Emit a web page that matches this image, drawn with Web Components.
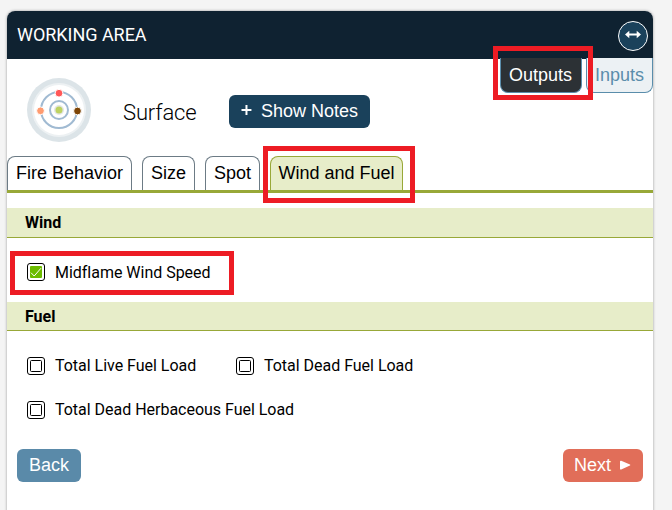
<!DOCTYPE html>
<html lang="en">
<head>
<meta charset="utf-8">
<title>Working Area</title>
<style>
html,body{margin:0;height:100%;overflow:hidden;background:#f4f4f4}
</style>
</head>
<body>
<working-area></working-area>
<script>
function define(name, html) {
  const t = document.createElement('template');
  t.innerHTML = html;
  customElements.define(name, class extends HTMLElement {
    constructor() {
      super();
      this.attachShadow({mode: 'open'}).append(t.content.cloneNode(true));
    }
  });
}

define('icon-expand', `<style>
:host{display:block;box-sizing:border-box;width:30px;height:30px;border:1px solid #fff;border-radius:50%;background:#1a415b}
svg{display:block}
</style><svg width="28" height="28" viewBox="0 0 28 28"><path d="M6 12.5 10.3 8.8V11.4H17.7V8.8L22 12.5 17.7 16.2V13.6H10.3V16.2Z" fill="#fff"/></svg>`);

define('module-icon', `<style>:host{display:block;width:64px;height:64px}svg{display:block}</style>
<svg width="64" height="64" viewBox="0 0 64 64">
<circle cx="32" cy="32" r="32" fill="#dce4e8"/><circle cx="32" cy="32" r="27" fill="#edf1f3"/><circle cx="32" cy="32" r="25" fill="#fff"/>
<g fill="none" stroke="#a0bad2" stroke-width="2"><circle cx="32" cy="32" r="18"/><circle cx="32" cy="32" r="9"/></g>
<g stroke="#fff" stroke-width="1"><circle cx="32" cy="15.2" r="3.9" fill="#ff5757"/><circle cx="13.5" cy="32.8" r="3.9" fill="#ff9b70"/><circle cx="50.5" cy="33" r="3.9" fill="#7d4507"/></g>
<circle cx="32" cy="32" r="5" fill="#e3e7e5"/><circle cx="32" cy="32" r="3.5" fill="#bdd261"/>
</svg>`);

define('io-tab', `<style>
:host{display:block;box-sizing:border-box;height:35px;padding:0 8px;border:1px solid #5a8dab;border-top:0;border-radius:0 0 8px 8px;background:#ecf1f4;color:#5a8dab;font:18px/34px "Liberation Sans",Arial,sans-serif;white-space:nowrap}
:host([selected]){background:#2c3135;color:#fff;padding:0 9px 0 8px}
</style><slot></slot>`);

define('output-tab', `<style>
:host{display:block;box-sizing:border-box;height:34px;border:1px solid #6c7b85;border-bottom:0;border-radius:8px 8px 0 0;background:#fff;color:#000;font:18px/33px "Liberation Sans",Arial,sans-serif;text-align:center;white-space:nowrap}
:host([selected]){background:#e7edc9;border-color:#98a838}
</style><slot></slot>`);

define('app-button', `<style>
:host{display:flex;box-sizing:border-box;align-items:center;height:33px;padding:0 12px;border-radius:6px;background:#1a415b;color:#fff;font:18px/33px "Liberation Sans",Arial,sans-serif;white-space:nowrap}
:host([kind=back]){background:#5a8aa9}
:host([kind=next]){background:#e16e59;padding-left:11px}
</style><slot name="before"></slot><span><slot></slot></span><slot name="after"></slot>`);

define('group-title', `<style>
:host{display:block;box-sizing:border-box;height:30px;padding-left:18px;background:#e7edc9;border-bottom:1px solid #98a838;font:700 16px/29px Roboto,sans-serif;color:#000}
</style><slot></slot>`);

define('check-item', `<style>
:host{display:flex;align-items:center;gap:10px;height:18px;font:16px/18px Roboto,sans-serif;letter-spacing:-.02px;color:#000;white-space:nowrap}
svg{display:block}
.on{display:none}
:host([checked]) .on{display:block}
:host([checked]) .off{display:none}
:host([checked]) span{padding-top:2px}
</style><svg width="18" height="18" viewBox="0 0 18 18"><rect x=".5" y=".5" width="17" height="17" rx="2.5" fill="#fff" stroke="#000"/>
<rect class="off" x="3.5" y="3.5" width="11" height="11" rx="1" fill="#fff" stroke="#000"/>
<g class="on"><rect x="3" y="3" width="12" height="12" rx="1" fill="#6cbc00"/><path d="M4 9.7 7.2 13 14 5.2" fill="none" stroke="#fff"/></g></svg><span><slot></slot></span>`);

define('callout-box', `<style>
:host{position:absolute;box-sizing:border-box;border:5px solid #ed1c24;z-index:2}
</style>`);

define('working-area', `<style>
:host{display:block;position:relative;height:510px;padding:11px 19px 0 7px;box-sizing:border-box;overflow:hidden}
.panel{height:520px;border-radius:8px;background:#fff;box-shadow:0 0 3px rgba(0,0,0,.38)}
header{box-sizing:border-box;display:flex;justify-content:space-between;align-items:center;height:48px;padding:2px 5px 0 10px;border-radius:8px 8px 0 0;background:#0f2231;color:#fff}
h1{margin:0;font:400 18px/46px Roboto,sans-serif;letter-spacing:-.04px;padding-bottom:2px}
.body{position:relative;display:grid;grid-template-rows:97px 37px auto}
.io{display:flex;gap:4px;position:absolute;right:0;top:-1px}
.top{display:flex;align-items:flex-start;padding:19px 0 0 20px}
h2{margin:20px 0 0 32px;width:106px;font:300 22px/30px Roboto,sans-serif;letter-spacing:-.15px;color:#000;box-sizing:border-box}
.top app-button{margin-top:17px;width:141px}
.plus{margin-right:9px}
.tabs{display:flex;gap:10px;border-bottom:3px solid #98a838}
.groups{padding-top:15px}
.checks{display:grid;grid-template-columns:209px auto;row-gap:26px;padding:25px 20px 21px}
.checks.second{padding:26px 20px 30px}
.wide{grid-column:1/3}
footer{display:flex;justify-content:space-between;padding:0 10px}
.short{height:29px;line-height:29px}
</style>
<section class="panel">
<header><h1>WORKING AREA</h1><icon-expand></icon-expand></header>
<div class="body">
<div class="top"><module-icon></module-icon><h2>Surface</h2>
<app-button><svg class="plus" slot="before" width="11" height="13" viewBox="0 0 11 13"><path d="M5.5 0V10M.5 5H10.5" stroke="#fff" stroke-width="2"/></svg>Show Notes</app-button></div>
<nav class="tabs"><output-tab style="width:125px">Fire Behavior</output-tab><output-tab style="width:53px">Size</output-tab><output-tab style="width:55px">Spot</output-tab><output-tab style="width:133px" selected>Wind and Fuel</output-tab></nav>
<div class="groups">
<group-title>Wind</group-title>
<div class="checks"><check-item checked>Midflame Wind Speed</check-item></div>
<group-title class="short">Fuel</group-title>
<div class="checks second"><check-item>Total Live Fuel Load</check-item><check-item>Total Dead Fuel Load</check-item><check-item class="wide">Total Dead Herbaceous Fuel Load</check-item></div>
<footer><app-button kind="back" style="width:64px">Back</app-button><app-button kind="next" style="width:80px">Next<svg slot="after" style="margin-left:9px" width="11" height="12" viewBox="0 0 11 12"><path d="M0 1.2Q.3.5 1.2.8L10 4.6Q10.6 5 10 5.4L1.2 9.4Q.3 9.8 0 9Z" fill="#fff"/></svg></app-button></footer>
</div>
<div class="io"><io-tab selected>Outputs</io-tab><io-tab>Inputs</io-tab></div>
</div>
</section>
<callout-box style="left:493px;top:46px;width:100px;height:54px"></callout-box>
<callout-box style="left:263px;top:146px;width:152px;height:57px"></callout-box>
<callout-box style="left:10px;top:251px;width:224px;height:44px"></callout-box>`);
</script>
</body>
</html>
